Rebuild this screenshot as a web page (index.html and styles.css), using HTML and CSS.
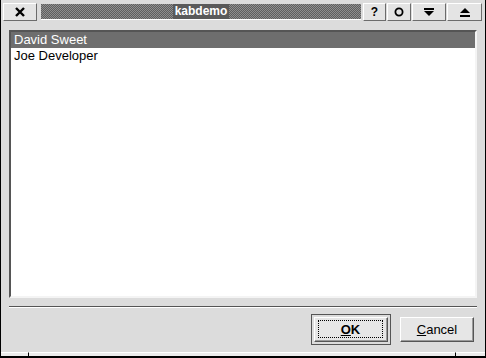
FILE: index.html
```html
<!DOCTYPE html>
<html>
<head>
    <meta charset="UTF-8">
    <title>kabdemo</title>
    <link rel="stylesheet" href="styles.css">
</head>
<body>
    <div class="frame">
        <div class="titlebar">
            <button class="tb-btn close">
                <svg width="10" height="10" viewBox="0 0 10 10"><path d="M1 1 L9 9 M9 1 L1 9" stroke="#000" stroke-width="2.4"/></svg>
            </button>
            <div class="title"><span>kabdemo</span></div>
            <button class="tb-btn help">?</button>
            <button class="tb-btn sticky">
                <svg width="10" height="10" viewBox="0 0 10 10"><circle cx="5" cy="5" r="3.6" fill="none" stroke="#000" stroke-width="1.8"/></svg>
            </button>
            <button class="tb-btn iconify">
                <svg width="10" height="9" viewBox="0 0 10 9"><rect x="0" y="0" width="10" height="2" fill="#000"/><path d="M0 3 L10 3 L5 8 Z" fill="#000"/></svg>
            </button>
            <button class="tb-btn maximize">
                <svg width="10" height="9" viewBox="0 0 10 9"><path d="M5 0 L10 5 L0 5 Z" fill="#000"/><rect x="0" y="7" width="10" height="2" fill="#000"/></svg>
            </button>
        </div>

        <div class="content">
            <div class="listbox">
                <div class="item selected">David Sweet</div>
                <div class="item">Joe Developer</div>
            </div>
            <div class="separator"></div>
            <div class="actions">
                <div class="default-frame">
                    <button class="btn ok"><span class="focus"><u>O</u>K</span></button>
                </div>
                <button class="btn cancel"><u>C</u>ancel</button>
            </div>
        </div>

        <div class="bottom-edge">
            <div class="edge-seg left"></div>
            <div class="edge-seg mid"></div>
            <div class="edge-seg right"></div>
        </div>
    </div>
</body>
</html>
```

FILE: styles.css
```css
html, body {
    margin: 0;
    padding: 0;
}
body {
    width: 486px;
    height: 358px;
    background: #dcdcdc;
    font-family: "Liberation Sans", Arial, sans-serif;
    overflow: hidden;
}
.frame {
    box-sizing: border-box;
    width: 486px;
    height: 358px;
    border-left: 1px solid #000;
    border-right: 1px solid #000;
    display: flex;
    flex-direction: column;
}

/* title bar */
.titlebar {
    display: flex;
    align-items: stretch;
    height: 18px;
    margin-top: 3px;
}
.tb-btn {
    box-sizing: border-box;
    margin: 0 0 0 1px;
    padding: 0;
    height: 18px;
    background: #e4e4e4;
    border: 1px solid;
    border-color: #fff #6c6c6c #6c6c6c #fff;
    display: flex;
    align-items: center;
    justify-content: center;
    font-family: "Liberation Sans", Arial, sans-serif;
    font-weight: bold;
    font-size: 12px;
    color: #000;
}
.close {
    width: 34px;
    margin-left: 2px;
}
.help {
    width: 23px;
    margin-left: 2px;
}
.sticky {
    width: 24px;
}
.iconify {
    width: 34px;
}
.maximize {
    width: 35px;
}
.title {
    box-sizing: border-box;
    width: 320px;
    margin: 1px 0 0 4px;
    height: 16px;
    background-color: #666;
    background-image: repeating-conic-gradient(#8e8e8e 0 25%, #5e5e5e 0 50%);
    background-size: 2px 2px;
    border-bottom: 1px solid #fff;
    display: flex;
    justify-content: center;
    align-items: center;
}
.title span {
    background: #5a5a5a;
    color: #fff;
    font-weight: bold;
    font-size: 12px;
    padding: 0 2px;
    line-height: 15px;
}

/* dialog body */
.content {
    flex: 1;
    padding: 9px 8px 0 8px;
}
.listbox {
    box-sizing: border-box;
    width: 468px;
    height: 268px;
    background: #fff;
    border: 2px solid;
    border-color: #555 #f4f4f4 #f4f4f4 #555;
}
.item {
    height: 16px;
    line-height: 16px;
    padding-left: 3px;
    font-size: 13px;
    color: #000;
}
.item.selected {
    background: #6e6e6e;
    color: #fff;
}
.separator {
    width: 468px;
    margin-top: 8px;
    border-top: 1px solid #555;
    border-bottom: 1px solid #fff;
}
.actions {
    display: flex;
    align-items: center;
    margin-top: 6px;
    padding-left: 302px;
}
.default-frame {
    box-sizing: border-box;
    width: 80px;
    height: 31px;
    border: 1px solid #555;
    padding: 2px;
    display: flex;
}
.btn {
    box-sizing: border-box;
    margin: 0;
    padding: 0;
    background: #e6e6e6;
    border: 1px solid;
    border-color: #fff #555 #555 #fff;
    box-shadow: inset -1px -1px 0 #9a9a9a;
    font-family: "Liberation Sans", Arial, sans-serif;
    font-size: 13px;
    color: #000;
    display: flex;
    align-items: center;
    justify-content: center;
}
.ok {
    flex: 1;
    font-weight: bold;
    padding: 2px 4px 3px 3px;
}
.ok .focus {
    flex: 1;
    align-self: stretch;
    border: 1px dotted #000;
    display: flex;
    align-items: center;
    justify-content: center;
}
.cancel {
    width: 74px;
    height: 25px;
    margin-left: 9px;
}

/* bottom window edge */
.bottom-edge {
    display: flex;
    height: 6px;
}
.edge-seg {
    box-sizing: border-box;
    height: 6px;
    border-top: 1px solid #fff;
    border-bottom: 2px solid #000;
    background: #ececec;
}
.edge-seg.left {
    width: 28px;
    border-right: 1px solid #000;
}
.edge-seg.mid {
    flex: 1;
    border-right: 1px solid #000;
}
.edge-seg.right {
    width: 29px;
}
```
